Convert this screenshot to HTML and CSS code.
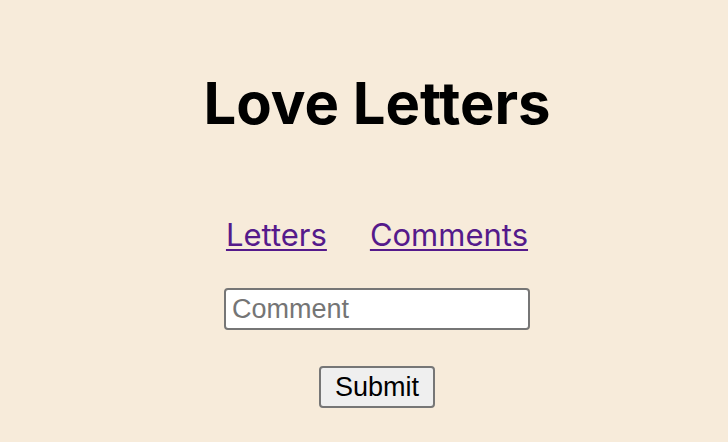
FILE: index.html
```html
<!DOCTYPE html>
<html>
<head>
<meta charset="utf-8">
<link rel="stylesheet" href="styles.css">
</head>
<body>
<main class="page">
  <h1 class="title">Love Letters</h1>
  <nav class="nav">
    <a class="nav-link" href="#letters">Letters</a>
    <a class="nav-link" href="#comments">Comments</a>
  </nav>
  <form class="comment-form">
    <input class="comment-input" type="text" placeholder="Comment">
    <button class="submit-btn" type="button">Submit</button>
  </form>
</main>
</body>
</html>
```
FILE: styles.css
```css
html, body {
  margin: 0;
  padding: 0;
  background: #f7ebda;
}
.page {
  display: flex;
  flex-direction: column;
  align-items: center;
  font-family: Inter, "Noto Sans", sans-serif;
  padding-top: 71px;
  padding-left: 26px;
}
.title {
  margin: 0;
  font-size: 58px;
  font-weight: 700;
  color: #000;
  line-height: 64px;
}
.nav {
  display: flex;
  gap: 43px;
  margin-top: 81px;
}
.nav-link {
  font-size: 31px;
  line-height: 38px;
  color: #551a8b;
  text-decoration: underline;
  text-decoration-thickness: 2px;
  text-underline-offset: 3px;
}
.comment-form {
  display: flex;
  flex-direction: column;
  align-items: center;
  margin-top: 34px;
  gap: 36px;
}
.comment-input {
  box-sizing: border-box;
  width: 306px;
  height: 42px;
  font-family: "Liberation Sans", Arial, sans-serif;
  font-size: 27px;
  padding: 2px 6px;
  border: 2px solid #767676;
  border-radius: 4px;
  background: #fff;
}
.comment-input::placeholder {
  color: #757575;
}
.submit-btn {
  box-sizing: border-box;
  height: 42px;
  font-family: "Liberation Sans", Arial, sans-serif;
  font-size: 27px;
  padding: 0 14px;
  border: 2px solid #767676;
  border-radius: 4px;
  background: #efefef;
  color: #000;
}
```
